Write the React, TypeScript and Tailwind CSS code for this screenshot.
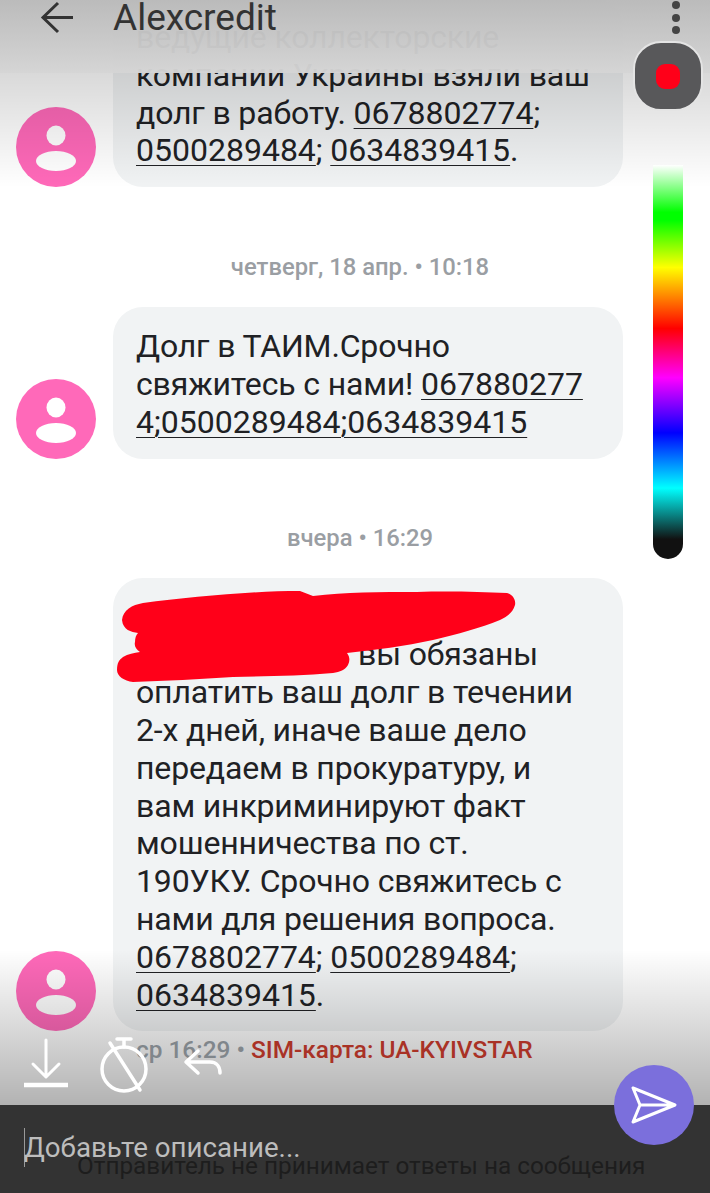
import React from 'react';

const Phone = ({ children }: { children: React.ReactNode }) => (
  <span className="underline decoration-1 underline-offset-[4px] tracking-normal">{children}</span>
);

const Avatar = () => (
  <div className="w-20 h-20 shrink-0 rounded-full bg-[#ff69b9] flex items-center justify-center">
    <svg width="80" height="80" viewBox="0 0 80 80">
      <ellipse cx="40" cy="28.5" rx="9.5" ry="10" fill="#fff" />
      <ellipse cx="40" cy="54" rx="20" ry="10" fill="#fff" />
    </svg>
  </div>
);

const Message = ({ children }: { children: React.ReactNode }) => (
  <div className="flex items-end pl-4 pr-[87px] gap-[17px]">
    <Avatar />
    <div className="flex-1 bg-[#f1f3f4] rounded-[30px] px-[23px] pt-[21px] pb-[17px] text-[32px] leading-[37.8px] tracking-[-0.15px] text-[#202124] whitespace-nowrap">
      {children}
    </div>
  </div>
);

const DateLabel = ({ text }: { text: string }) => (
  <div className="h-[34px] flex items-center justify-center pl-[10px] text-[23.8px] font-medium text-[#9a9ea3]">
    {text}
  </div>
);

export default function App() {
  return (
    <div className="relative w-[710px] h-[1193px] overflow-hidden bg-white font-['Roboto',sans-serif]">
      {/* Message list */}
      <div className="-mt-[2px] flex flex-col">
        <Message>
          <div>ведущие коллекторские</div>
          <div>компании Украины взяли ваш</div>
          <div>
            долг в работу. <Phone>0678802774</Phone>;
          </div>
          <div>
            <Phone>0500289484</Phone>; <Phone>0634839415</Phone>.
          </div>
        </Message>
        <div className="mt-[64px] mb-[22px]">
          <DateLabel text="четверг, 18 апр. • 10:18" />
        </div>
        <Message>
          <div>Долг в ТАИМ.Срочно</div>
          <div>
            свяжитесь с нами! <Phone>067880277</Phone>
          </div>
          <div>
            <Phone>4;0500289484;0634839415</Phone>
          </div>
        </Message>
        <div className="mt-[63px] mb-[22px]">
          <DateLabel text="вчера • 16:29" />
        </div>
        <Message>
          <div>&nbsp;</div>
          <div>
            <span className="inline-block w-[222px]" />
            вы обязаны
          </div>
          <div>оплатить ваш долг в течении</div>
          <div>2-х дней, иначе ваше дело</div>
          <div>передаем в прокуратуру, и</div>
          <div>вам инкриминируют факт</div>
          <div>мошенничества по ст.</div>
          <div>190УКУ. Срочно свяжитесь с</div>
          <div>нами для решения вопроса.</div>
          <div>
            <Phone>0678802774</Phone>; <Phone>0500289484</Phone>;
          </div>
          <div>
            <Phone>0634839415</Phone>.
          </div>
        </Message>
      </div>

      {/* Red scribble over the name */}
      <svg className="absolute left-0 top-0 pointer-events-none" width="710" height="1193" viewBox="0 0 710 1193">
        <path
          fill="#ff0019"
          d="M122 620 C123 610 132 605 143 603 C190 597 250 591 300 591 L313 596 C345 592 380 592 417 592 C450 591 480 592 507 593 C513 595 516 600 515 605 C513 612 508 616 500 620 C480 628 458 634 433 640 C405 646 375 650 347 653 C350 657 350 661 348 665 C345 670 340 672 333 673 C300 676 265 676 233 677 C200 679 165 681 133 682 C124 681 117 676 117 670 C117 663 119 660 123 657 C128 654 134 653 140 652 C136 649 134 646 135 642 C135 638 136 635 138 633 C131 632 123 630 122 620 Z"
        />
      </svg>

      {/* Top shadow under the app bar */}
      <div className="absolute left-0 right-0 top-[73px] h-[115px] bg-gradient-to-b from-black/15 to-transparent pointer-events-none" />

      {/* App bar */}
      <div className="absolute left-0 right-0 top-0 h-[73px] bg-gradient-to-b from-[#b9b9b9]/[0.97] to-[#d4d4d4]/[0.97]">
        <div className="flex items-start h-[36px] pl-[40px] pr-[30px]">
          <svg className="mt-[1px]" width="33" height="33" viewBox="0 0 33 33" fill="none" stroke="#333" strokeWidth="3">
            <path d="M33 16.5 H3 M18 2 L3 16.5 L18 31" />
          </svg>
          <div className="ml-[40px] text-[37px] leading-[36px] text-[#333] flex-1">Alexcredit</div>
          <div className="flex flex-col gap-[4.5px] pt-[1px]">
            <div className="w-2 h-2 rounded-full bg-[#444]" />
            <div className="w-2 h-2 rounded-full bg-[#444]" />
            <div className="w-2 h-2 rounded-full bg-[#444]" />
          </div>
        </div>
      </div>

      {/* Record button */}
      <div className="absolute left-[633px] top-[41px] w-[70px] h-[70px] rounded-[28px] bg-[#58585a] border-2 border-[#e4e4e4] flex items-center justify-center">
        <div className="w-6 h-[25px] rounded-[9px] bg-[#ff0019]" />
      </div>

      {/* Colour slider */}
      <div className="absolute left-[653px] top-[165px] w-[30px] h-[394px] rounded-b-[15px] bg-[linear-gradient(to_bottom,#ffffff_0%,#00ff00_12%,#00ff00_14%,#ffff00_26%,#ff0000_41.5%,#ff00ff_54%,#0000ff_68%,#00ffff_82%,#111111_95%,#111111_100%)]" />

      {/* Bottom fade */}
      <div className="absolute left-0 right-0 top-[950px] h-[155px] bg-gradient-to-b from-transparent to-black/30 pointer-events-none" />

      {/* Delivery line, sits on the fade */}
      <div className="absolute left-[136px] top-[1036px] text-[24.4px] leading-[28px] font-medium whitespace-nowrap">
        <span className="text-[#80868b]">ср 16:29 • </span>
        <span className="text-[#a93226]">SIM-карта: UA-KYIVSTAR</span>
      </div>

      {/* Media actions */}
      <svg className="absolute left-[20px] top-[1034px]" width="210" height="70" viewBox="0 0 210 70" fill="none" stroke="#fff" strokeLinecap="round" strokeLinejoin="round">
        <path strokeWidth="3" d="M26 6 V42 M13 30 L26 43 L39 30" />
        <path strokeWidth="4.5" strokeLinecap="butt" d="M4 51 H48" />
        <circle strokeWidth="3.5" cx="104" cy="35" r="22" />
        <path strokeWidth="3.5" d="M104 13 V6 M97 5 H111" />
        <path strokeWidth="3.5" d="M90 9 L120 56" />
        <path strokeWidth="3.5" d="M178 17 L166 28 L178 39 M167 28 H190 C197 28 200 33 200 39" />
      </svg>

      {/* Caption bar */}
      <div className="absolute left-0 right-0 bottom-0 h-[88px] bg-[#333333]">
        <div className="absolute left-[24px] top-[23px] w-px h-[39px] bg-[#9a9a9a]" />
        <div className="absolute left-[24px] top-[27px] text-[27.7px] leading-[32px] text-[#bdbdbd]">Добавьте описание...</div>
        <div className="absolute left-[77px] top-[47px] text-[24.3px] leading-[28px] text-[#1d1d1d] whitespace-nowrap">
          Отправитель не принимает ответы на сообщения
        </div>
      </div>

      {/* Send button */}
      <div className="absolute left-[614px] top-[1065px] w-20 h-20 rounded-full bg-[#7b6fdc] flex items-center justify-center">
        <svg width="48" height="40" viewBox="0 0 48 40" fill="none" stroke="#fff" strokeWidth="3" strokeLinejoin="round">
          <path d="M3 3 L45 20 L3 37 L10 20 Z M10 20 H45" />
        </svg>
      </div>
    </div>
  );
}
